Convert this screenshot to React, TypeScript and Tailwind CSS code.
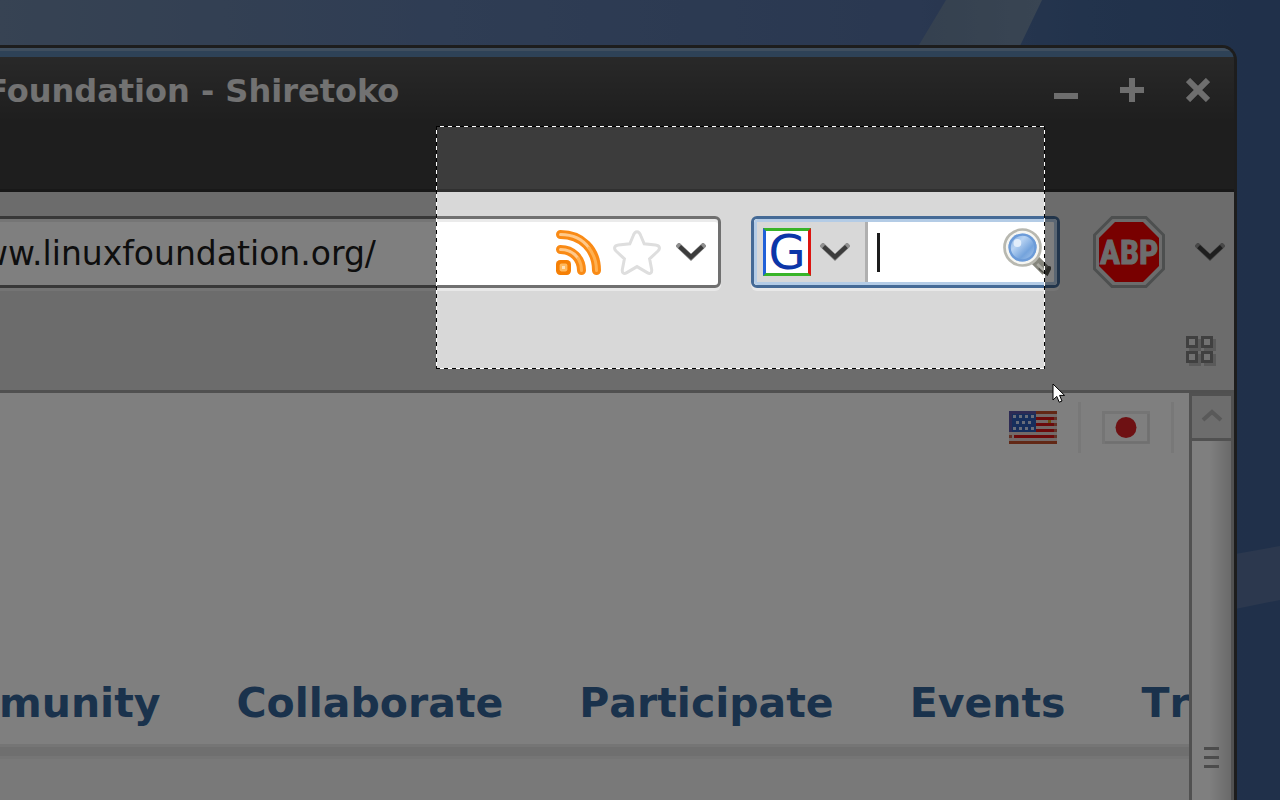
import type { ReactNode } from 'react';

const navItems = ['Community', 'Collaborate', 'Participate', 'Events', 'Training'];

function Chevron() {
  return (
    <svg width="30" height="18" viewBox="0 0 10 6" aria-hidden="true">
      <path d="M1 1 5 4.8 9 1" fill="none" stroke="#909090" strokeWidth="1.8" strokeLinecap="square" />
      <path d="M1.2 1.2 5 4.7 8.8 1.2" fill="none" stroke="#3c3c3c" strokeWidth="1.4" />
    </svg>
  );
}

function FeedIcon() {
  return (
    <svg width="45" height="45" viewBox="0 0 15 15" fill="none" strokeLinecap="round" aria-hidden="true">
      <g stroke="#f98a15" strokeWidth="3">
        <path d="M1.5 1.5C8.5 1.5 13.5 6.5 13.5 13.5" />
        <path d="M1.5 6.5C5.5 6.5 8.5 9.5 8.5 13.5" />
      </g>
      <rect x="0" y="10" width="5" height="5" rx="1.4" fill="#f57f05" />
      <g stroke="#ffc98a" strokeWidth="1">
        <path d="M1.5 1.5C6 1.5 9 3.2 11 6" />
        <path d="M1.5 6.5C4 6.5 6 7.5 7.4 9.5" />
      </g>
      <g stroke="#ffb050" strokeWidth="1">
        <path d="M11 6C12.8 8.4 13.5 10.5 13.5 13.5" />
        <path d="M7.4 9.5C8.2 10.8 8.5 12 8.5 13.5" />
      </g>
      <rect x="1.2" y="11.2" width="2.6" height="2.6" rx="0.6" fill="#ffb95e" />
      <rect x="2" y="12" width="1" height="1" fill="#ffe0b8" />
    </svg>
  );
}

function StarIcon() {
  return (
    <svg width="48" height="45" viewBox="0 0 16 15" aria-hidden="true">
      <path
        d="M8 .6C8.8.6 9 1.2 9.3 2L10.4 4.6 14.2 5C15.6 5.2 15.8 6.2 15 7L12.2 9.6 12.9 13.2C13 14.4 12.4 14.8 11.4 14.2L8 12.2 4.6 14.2C3.6 14.8 3 14.4 3.1 13.2L3.8 9.6 1 7C.2 6.2.4 5.2 1.8 5L5.600 4.600 6.700 2C7 1.2 7.2.6 8 .6Z"
        fill="#ffffff"
        stroke="#dedede"
        strokeWidth="1"
      />
    </svg>
  );
}

function MagnifierIcon() {
  return (
    <svg width="48" height="48" viewBox="0 0 16 16" aria-hidden="true">
      <defs>
        <linearGradient id="lens" x1="0" y1="0" x2="1" y2="1">
          <stop offset="0" stopColor="#6c9fdc" />
          <stop offset=".35" stopColor="#b9d4f3" />
          <stop offset=".65" stopColor="#74a3dc" />
          <stop offset="1" stopColor="#b4d0f0" />
        </linearGradient>
      </defs>
      <path d="M10.8 10.8 14.4 14.4" stroke="#85857c" strokeWidth="3.4" />
      <path d="M12.6 13.6 14.6 15 15.400 13.400" fill="none" stroke="#55554f" strokeWidth="1.4" strokeLinecap="round" />
      <path d="M11.4 12 14 14.4" stroke="#aaaaa2" strokeWidth=".9" />
      <circle cx="6.5" cy="6.5" r="6" fill="#f6f6f2" stroke="#b8b8b0" strokeWidth=".9" />
      <circle cx="6.5" cy="6.5" r="4.7" fill="url(#lens)" />
      <circle cx="6.5" cy="6.5" r="4.3" fill="none" stroke="#6c9bd8" strokeWidth=".8" />
      <circle cx="4.8" cy="5" r="1.3" fill="#e2eefb" />
    </svg>
  );
}

function AdblockIcon() {
  return (
    <svg width="72" height="72" viewBox="0 0 72 72" aria-hidden="true">
      <path d="M19 1.5H53L70.500 19V53L53 70.500H19L1.500 53V19Z" fill="#d8d8d8" stroke="#9a9f9f" strokeWidth="3" />
      <path d="M22 6H50L66 22V50L50 66H22L6 50V22Z" fill="#f00000" />
      <text
        x="36"
        y="48"
        textAnchor="middle"
        fontSize="34"
        fontWeight="700"
        fill="#dadada"
        stroke="#dadada"
        strokeWidth="1"
        className="font-['Roboto_Condensed','Liberation_Sans_Narrow','Open_Sans_Condensed',Roboto,sans-serif]"
      >
        ABP
      </text>
    </svg>
  );
}

function GridIcon() {
  const cells = [[0, 0], [15, 0], [0, 15], [15, 15]];
  return (
    <svg width="30" height="30" viewBox="0 0 30 30" aria-hidden="true">
      {cells.map(([x, y]) => (
        <rect key={`s${x}-${y}`} x={x + 3} y={y + 3} width="12" height="12" fill="#b4b4b4" />
      ))}
      {cells.map(([x, y]) => (
        <rect key={`${x}-${y}`} x={x + 1.5} y={y + 1.5} width="9" height="9" fill="#e4e4e4" stroke="#808080" strokeWidth="3" />
      ))}
    </svg>
  );
}

function UsFlag() {
  const stars = [[5, 5], [11, 5], [17, 5], [23, 5], [8, 11], [14, 11], [20, 11], [5, 17], [11, 17], [17, 17], [23, 17]];
  return (
    <svg width="48" height="33" viewBox="0 0 48 33" aria-hidden="true">
      <rect width="48" height="33" fill="#e6d4d0" />
      {[6, 12, 18, 24].map((y) => (
        <rect key={y} x="5" y={y} width="40" height="3" fill="#d81414" />
      ))}
      <path d="M0 1.500H48M0 31.500H48" stroke="#c4502c" strokeWidth="3" />
      <path d="M46.500 6V9M46.500 12V15M46.500 18V21M46.500 24V27M1.500 24V27" stroke="#c4644c" strokeWidth="3" />
      <rect width="27" height="21" fill="#2c5cb8" />
      <path d="M1.500 21V1.500H27" fill="none" stroke="#5a56a8" strokeWidth="3" />
      {stars.map(([x, y]) => (
        <rect key={`${x}-${y}`} x={x - 1} y={y - 1} width="3" height="3" fill="#d0daf4" />
      ))}
      <rect x="39" y="9" width="3" height="3" fill="#d8a020" />
    </svg>
  );
}

function JapanFlag() {
  return (
    <svg width="48" height="33" viewBox="0 0 48 33" aria-hidden="true">
      <rect x="1.5" y="1.5" width="45" height="30" fill="#ffffff" stroke="#eaeaea" strokeWidth="3" />
      <path d="M46.500 3V31.500H3" fill="none" stroke="#e0e0e0" strokeWidth="2" />
      <circle cx="24" cy="16.500" r="10.500" fill="#dc2226" />
    </svg>
  );
}

function WindowButton({ label, children }: { label: string; children: ReactNode }) {
  return (
    <button type="button" aria-label={label} className="flex size-6">
      <svg width="24" height="24" viewBox="0 0 24 24" fill="none" stroke="#dcdcdc" strokeWidth="6" aria-hidden="true">
        {children}
      </svg>
    </button>
  );
}

function Desktop() {
  return (
    <svg className="absolute inset-0 size-full" viewBox="0 0 1280 800" preserveAspectRatio="none" aria-hidden="true">
      <defs>
        <linearGradient id="sky" x1="0" y1="0" x2="1" y2="0">
          <stop offset="0" stopColor="#6e86a6" />
          <stop offset=".35" stopColor="#5e7aa8" />
          <stop offset=".72" stopColor="#5470a2" />
          <stop offset=".85" stopColor="#446698" />
          <stop offset="1" stopColor="#406094" />
        </linearGradient>
        <linearGradient id="beam" x1="0" y1="0" x2="1" y2="0">
          <stop offset="0" stopColor="#6a829f" />
          <stop offset="1" stopColor="#728aa6" />
        </linearGradient>
      </defs>
      <rect width="1280" height="800" fill="url(#sky)" />
      <path d="M946 0H1042L1018 50H916Z" fill="url(#beam)" />
      <path d="M1230 555 1280 546V600L1230 610Z" fill="#58719d" />
    </svg>
  );
}

function TitleBar() {
  return (
    <header className="flex h-[135px] items-start justify-between border-b-[3px] border-[#303030] bg-linear-to-b from-[#525252] to-[#3c3c3c] to-50% pr-6">
      <h1 className="pt-4 text-[32px] leading-[37px] font-bold whitespace-nowrap text-[#e4e4e4]">
        The Linux Foundation - Shiretoko
      </h1>
      <div className="flex gap-[42px] pt-[21px]">
        <WindowButton label="Minimize">
          <path d="M0 18H24" />
        </WindowButton>
        <WindowButton label="Maximize">
          <path d="M0 12H24M12 0V24" />
        </WindowButton>
        <WindowButton label="Close">
          <path d="M2 2 22 22M22 2 2 22" />
        </WindowButton>
      </div>
    </header>
  );
}

function Toolbar() {
  return (
    <div className="border-b-[3px] border-[#a0a0a0] bg-[#d8d8d8] pt-6 pb-6">
      <div className="flex h-[72px] items-center pr-[9px]">
        <div className="flex h-full flex-1 items-center rounded-r-md border-[3px] border-[#707070] bg-white pr-3 shadow-[0_3px_0_#e8e8e8,inset_0_3px_0_#ebebeb]">
          <input
            aria-label="Address"
            defaultValue="http://www.linuxfoundation.org/"
            className="w-[573px] min-w-0 bg-transparent pt-1 text-right text-[33px] leading-[40px] text-[#1c1c1c] outline-none"
          />
          <div className="ml-auto flex items-center">
            <button type="button" aria-label="Subscribe to feed" className="mr-3"><FeedIcon /></button>
            <button type="button" aria-label="Bookmark this page" className="mr-[15px]"><StarIcon /></button>
            <button type="button" aria-label="Show history"><Chevron /></button>
          </div>
        </div>
        <form className="ml-[30px] flex h-full w-[309px] rounded-md border-[3px] border-[#456a96] bg-white shadow-[0_3px_0_#e8e8e8]">
          <div className="flex flex-1 rounded-sm border-[3px] border-[#b4cce6]">
            <button
              type="button"
              aria-label="Choose search engine"
              className="flex w-[111px] items-center gap-[9px] border-r-[3px] border-[#b0b0b0] bg-[#d8d8d8] pl-1.5"
            >
              <span className="flex size-12 items-center justify-center border-[3px] border-t-[#38b428] border-r-[#dc1410] border-b-[#38b428] border-l-[#2060d8] bg-white text-[48px] leading-[42px] text-[#0c36a8]">
                G
              </span>
              <Chevron />
            </button>
            <span className="my-auto ml-[9px] h-[39px] w-[3px] shrink-0 bg-[#1c1c1c]" />
            <input aria-label="Search" className="w-0 min-w-0 flex-1 bg-transparent text-[33px] outline-none" />
            <button type="submit" aria-label="Search the web" className="mr-[3px]"><MagnifierIcon /></button>
          </div>
        </form>
        <button type="button" aria-label="Adblock Plus" className="ml-[33px]"><AdblockIcon /></button>
        <button type="button" aria-label="Adblock options" className="ml-[30px]"><Chevron /></button>
      </div>
      <div className="mt-12 flex h-[30px] justify-end pr-[18px]">
        <button type="button" aria-label="Tab overview"><GridIcon /></button>
      </div>
    </div>
  );
}

function SitePage() {
  return (
    <main className="flex min-w-0 flex-1 flex-col overflow-hidden bg-white">
      <ul className="mt-[9px] flex h-[51px] justify-end pr-[15px]">
        <li className="mr-[21px] flex items-center border-r-[3px] border-[#f0f0f0] pr-[21px]">
          <a href="#en" aria-label="English"><UsFlag /></a>
        </li>
        <li className="flex items-center border-r-[3px] border-[#f0f0f0] pr-[21px]">
          <a href="#ja" aria-label="Japanese"><JapanFlag /></a>
        </li>
      </ul>
      <nav className="mt-[226px] flex gap-[76px] pb-[17px] pl-[98px] text-[41px] leading-[48px] font-bold text-[#356599] [font-kerning:none]">
        {navItems.map((item) => (
          <a key={item} href={`#${item.toLowerCase()}`}>{item}</a>
        ))}
      </nav>
      <div className="flex-1 bg-[#f2f2f2]">
        <div className="h-[15px] border-y-[3px] border-[#eaeaea] bg-[#dfdfdf]" />
      </div>
    </main>
  );
}

function Scrollbar() {
  return (
    <div className="flex w-[45px] flex-col border-x-[3px] border-[#a2a2a2]">
      <button type="button" aria-label="Scroll up" className="flex h-12 items-center justify-center border-y-[3px] border-[#a2a2a2] bg-[#dadada]">
        <svg width="24" height="18" viewBox="0 0 24 18" fill="none" stroke="#b2b2b2" strokeWidth="4" aria-hidden="true">
          <path d="M3 12 12 4 21 12" />
        </svg>
      </button>
      <div className="flex flex-1 flex-col items-center gap-1.5 bg-linear-to-r from-white from-45% to-[#d4d4d4] pt-[306px]">
        <span className="h-[3px] w-[15px] bg-[#989898]" />
        <span className="h-[3px] w-[15px] bg-[#989898]" />
        <span className="h-[3px] w-[15px] bg-[#989898]" />
      </div>
    </div>
  );
}

function Selection() {
  return (
    <div className="absolute top-[126px] left-[436px] h-[243px] w-[609px] shadow-[0_0_0_9999px_rgba(0,0,0,0.5)]">
      <div className="absolute inset-x-0 top-0 h-px bg-[repeating-linear-gradient(to_right,#000_0_4px,#fff_4px_8px)]" />
      <div className="absolute inset-x-0 bottom-0 h-px bg-[repeating-linear-gradient(to_right,#000_0_4px,#fff_4px_8px)]" />
      <div className="absolute inset-y-0 left-0 w-px bg-[repeating-linear-gradient(to_bottom,#000_0_4px,#fff_4px_8px)]" />
      <div className="absolute inset-y-0 right-0 w-px bg-[repeating-linear-gradient(to_bottom,#000_0_4px,#fff_4px_8px)]" />
    </div>
  );
}

export default function App() {
  return (
    <div className="relative flex h-screen overflow-hidden font-['DejaVu_Sans',sans-serif]">
      <Desktop />
      <div className="relative mt-[45px] mr-[43px] -ml-[200px] flex flex-1 flex-col overflow-hidden rounded-tr-[15px] border-t-[3px] border-r-[3px] border-[#3a3a3a] bg-[#3c3c3c]">
        <div className="h-[9px] shrink-0 border-t-[3px] border-[#7f9cbc] bg-[#5c84ae]" />
        <TitleBar />
        <Toolbar />
        <div className="flex min-h-0 flex-1">
          <SitePage />
          <Scrollbar />
        </div>
      </div>
      <Selection />
      <svg className="absolute top-[383px] left-[1052px]" width="14" height="21" viewBox="0 0 14 21" aria-hidden="true">
        <path d="M1 1V17L4.800 13.400 7.200 19.200 10 18 7.600 12.400H12.600Z" fill="#ffffff" stroke="#000000" strokeWidth="1" />
      </svg>
    </div>
  );
}
